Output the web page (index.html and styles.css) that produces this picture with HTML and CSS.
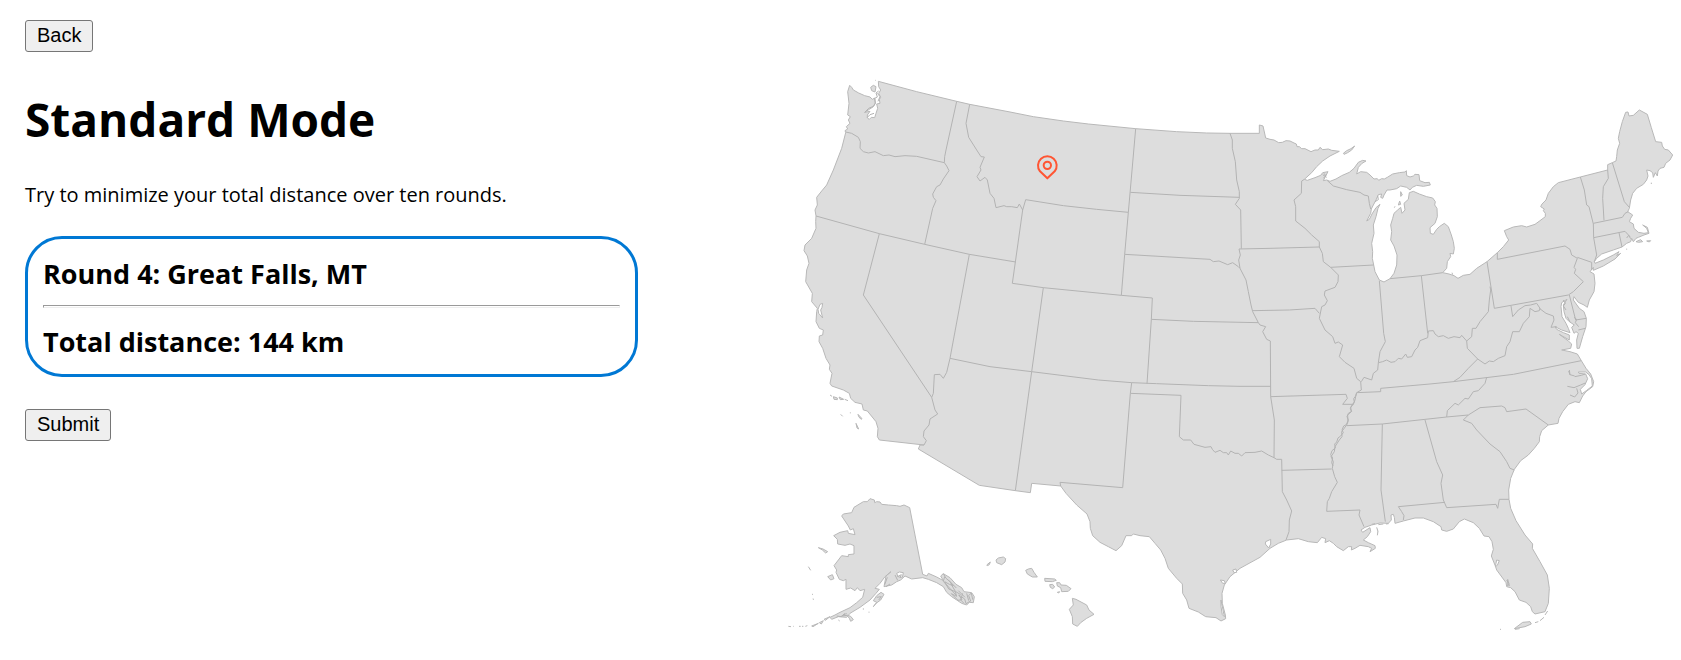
FILE: index.html
```html
<!DOCTYPE html>
<html lang="en">
<head>
<meta charset="utf-8">
<title>Standard Mode</title>
<link rel="stylesheet" href="styles.css">
</head>
<body>
<div class="game">
<main class="panel">
  <button type="button" class="btn">Back</button>
  <h1 class="title">Standard Mode</h1>
  <p class="intro">Try to minimize your total distance over ten rounds.</p>
  <section class="card">
    <h2 class="stat">Round 4: Great Falls, MT</h2>
    <hr class="rule">
    <h2 class="stat">Total distance: 144 km</h2>
  </section>
  <button type="button" class="btn">Submit</button>
</main>
<div class="map">
<svg class="map-svg" viewBox="0 0 2703 1780" role="img" aria-label="Map of the United States">
<g class="land">
<!-- Contiguous states -->
<path d="M209 76L215 82 220 90 236 99 254 107 270 111 277 118 284 114 286 130 280 140 268 148 254 157 270 154 262 165 262 174 268 178 274 172 284 173 288 160 293 145 290 132 300 130 298 118 302 112 296 100 302 90 296 80 295 64 410 95 530 124 569 133 690 156 760 170 850 183 925 192 1067 206 1190 215 1280 219 1350 220 1438 220 1438 195 1449 198 1457 234 1470 238 1482 240 1496 248 1507 247 1518 242 1530 243 1542 249 1549 252 1551 260 1558 260 1565 266 1575 266 1593 275 1605 270 1615 270 1620 262 1628 269 1645 267 1655 271 1678 274 1650 288 1628 303 1610 320 1595 338 1573 358 1582 361 1605 353 1622 346 1628 338 1644 335 1636 350 1630 362 1640 360 1650 364 1668 357 1685 347 1708 337 1722 325 1735 307 1748 301 1758 303 1746 310 1735 322 1730 342 1742 335 1760 337 1770 345 1782 357 1792 356 1796 361 1805 356 1813 357 1822 352 1838 342 1858 338 1875 336 1879 332 1880 347 1890 351 1900 348 1905 343 1917 344 1919 362 1935 368 1948 367 1951 375 1930 379 1910 376 1897 382 1890 390 1880 382 1862 378 1850 386 1830 390 1821 390 1812 405 1808 415 1802 412 1805 402 1795 404 1788 420 1780 435 1774 447 1772 460 1760 483 1768 478 1776 462 1788 443 1800 433 1794 445 1788 470 1780 495 1782 520 1775 550 1778 575 1777 595 1781 615 1785 635 1798 660 1812 666 1830 656 1842 640 1850 615 1851 585 1842 558 1832 540 1835 515 1832 495 1838 475 1842 460 1853 450 1862 442 1866 460 1875 450 1872 430 1885 418 1888 398 1900 394 1918 402 1940 410 1958 414 1966 425 1964 435 1971 445 1972 470 1965 490 1950 503 1951 520 1960 523 1970 508 1978 500 1993 490 2005 500 2014 525 2020 545 2023 565 2020 582 2010 580 2012 590 2002 605 2000 625 1988 638 2007 642 2022 647 2034 655 2050 646 2070 643 2090 625 2121 605 2152 578 2170 560 2186 540 2180 530 2173 512 2200 501 2225 497 2240 501 2265 493 2280 482 2296 470 2296 460 2290 452 2293 447 2282 440 2286 432 2298 420 2305 400 2320 380 2335 368 2401 351 2483 330 2483 314 2497 308 2508 303 2510 290 2512 270 2519 250 2515 235 2519 215 2527 185 2537 157 2544 156 2547 168 2560 166 2578 150 2602 163 2614 203 2627 245 2645 247 2647 258 2654 268 2665 270 2678 285 2670 300 2657 310 2652 322 2640 325 2634 333 2632 348 2626 338 2620 352 2618 338 2610 332 2600 330 2604 348 2600 360 2590 373 2570 385 2558 400 2552 420 2548 445 2543 455 2558 465 2552 475 2548 485 2560 492 2562 505 2575 517 2592 520 2605 518 2600 505 2588 495 2602 502 2607 520 2592 525 2575 532 2568 535 2560 545 2555 535 2552 545 2540 550 2526 561 2500 570 2465 582 2450 595 2443 605 2445 610 2470 600 2500 585 2517 575 2510 587 2522 580 2505 597 2470 618 2440 631 2440 622 2430 635 2442 642 2445 670 2442 695 2428 720 2422 742 2412 735 2395 727 2382 710 2380 720 2398 745 2412 755 2419 775 2418 800 2408 830 2398 865 2391 865 2390 840 2395 820 2388 815 2382 820 2375 802 2383 795 2368 785 2358 775 2352 755 2350 735 2361 718 2345 728 2343 740 2346 770 2358 790 2365 805 2370 818 2345 810 2325 800 2330 808 2350 818 2368 825 2368 840 2338 823 2365 843 2375 852 2372 865 2345 870 2370 875 2392 882 2404 902 2418 925 2432 942 2441 965 2438 980 2418 995 2408 1008 2398 1028 2385 1025 2365 1033 2348 1055 2337 1075 2334 1090 2305 1095 2285 1112 2279 1130 2278 1145 2263 1165 2245 1185 2222 1202 2203 1228 2192 1255 2186 1290 2187 1318 2192 1345 2208 1382 2235 1425 2258 1452 2257 1465 2280 1505 2302 1545 2308 1585 2305 1630 2295 1655 2265 1662 2257 1655 2252 1640 2238 1627 2218 1620 2205 1595 2192 1583 2180 1580 2178 1568 2150 1530 2146 1518 2134 1488 2140 1468 2136 1445 2127 1430 2112 1428 2098 1405 2080 1388 2053 1377 2038 1385 2020 1407 2000 1414 1985 1410 1983 1400 1960 1385 1930 1374 1905 1374 1870 1383 1845 1390 1843 1372 1840 1363 1833 1365 1834 1380 1825 1390 1800 1389 1775 1395 1755 1402 1743 1410 1748 1417 1770 1403 1772 1415 1762 1430 1750 1440 1765 1448 1785 1457 1786 1465 1770 1475 1775 1465 1765 1460 1740 1456 1725 1465 1714 1470 1715 1460 1705 1460 1690 1472 1670 1460 1660 1450 1648 1442 1635 1448 1637 1436 1625 1432 1612 1448 1585 1445 1555 1436 1520 1440 1495 1450 1470 1465 1440 1492 1380 1525 1350 1550 1333 1575 1326 1600 1327 1630 1336 1665 1337 1676 1323 1683 1308 1673 1277 1670 1255 1656 1227 1645 1220 1620 1208 1600 1207 1572 1190 1555 1165 1525 1155 1495 1142 1470 1125 1450 1108 1430 1080 1427 1060 1422 1055 1427 1038 1427 1025 1457 1008 1472 985 1460 960 1447 938 1427 931 1405 930 1385 921 1362 890 1335 858 1300 842 1278 755 1270 751 1298 706 1292 598 1276 415 1167 420 1155 432 1155 298 1140 292 1130 294 1105 288 1085 262 1053 250 1050 246 1032 225 1027 212 1015 208 1000 190 990 155 978 150 970 156 940 148 928 150 915 138 895 128 865 117 845 118 828 128 825 130 810 118 805 108 785 110 755 112 745 95 725 97 700 77 665 80 630 87 610 82 588 72 572 75 555 95 535 108 505 107 485 108 468 105 450 112 435 110 412 125 393 140 375 160 330 185 265 197 218 195 212 203 207 199 200 210 190 205 180 211 170 203 165 207 130 203 95Z"/>
<!-- Lake and coastal islands -->
<path d="M1690 280L1700 272 1713 266 1724 258 1715 270 1703 278 1692 283ZM272 82L280 76 288 80 285 96 275 92ZM286 61h2M150 1005l6 4M160 1010l12 4 0 5-10-1ZM177 1011l14 7-10 1ZM194 1018l10 4M182 1063l6 6M211 1057v3M234 1063l12 13-3 2-7-8ZM228 1090l8 17-5-3ZM2568 545l14-6 6 6-12 2ZM2600 543l12-1-4 4ZM2614 368v4M2540 566v3M1855 435l4-12 3 10ZM1862 395l5 10-5 4ZM1843 443l2-4M2203 1706L2228 1687 2250 1685 2254 1692 2235 1700ZM2205 1708l14-2M2265 1688l10-3M2280 1682l12-10M2295 1665l8-12M2160 1708h3M1790 1402l4 12-2 12M1775 1393l10-2M1795 1394l15-2M1818 1392l8-1M2016 638l2 6"/>
<!-- Alaska -->
<path d="M428 1543L389 1343 372 1335 360 1339 350 1337 325 1335 305 1333 300 1326 290 1325 284 1328 283 1320 270 1316 262 1325 250 1325 240 1331 222 1342 215 1358 190 1362 185 1368 205 1398 211 1410 220 1406 225 1424 205 1420 203 1412 180 1417 161 1427 172 1438 173 1452 195 1456 210 1452 222 1457 222 1482 205 1484 205 1490 185 1487 175 1500 162 1517 170 1530 168 1537 178 1558 190 1562 198 1558 198 1588 212 1584 225 1592 232 1583 240 1592 254 1588 248 1612 230 1628 210 1643 180 1657 165 1665 150 1672 155 1678 175 1670 200 1672 210 1660 240 1642 270 1620 288 1600 298 1588 285 1585 300 1570 315 1550 333 1535 318 1548 312 1580 335 1575 350 1565 362 1560 375 1548 395 1557 428 1553 445 1558 470 1568 490 1580 500 1597 515 1610 530 1620 545 1630 560 1635 568 1627 580 1628 583 1610 575 1598 552 1595 545 1583 528 1573 510 1553 490 1541 482 1548 490 1562 470 1551 445 1540 441 1548ZM280 1622L290 1607 303 1597 312 1603 302 1620 288 1630 280 1640 290 1627ZM115 1463l14 4 14 8-6 4-10-9ZM143 1550l14-6 5 12-10 4ZM85 1520l7 11M96 1602l3 2M98 1617l4 1M150 1670l-18 8 4 3ZM130 1682l-12 6 6 4ZM115 1690l-20 8 4 2ZM82 1697l-6 2M70 1699h-4M62 1699h-5M42 1699h-2M33 1700l-8-1M200 1665l12 4 8 10-8 5-4-9ZM250 1645v4M267 1655v3M350 1540l8-4 12 2-3 14-13-2ZM175 1680l4 3"/>
<!-- Hawaii -->
<path d="M620 1515l11-9-3 8-6 3ZM648 1500L655 1494 670 1491 677 1496 675 1506 665 1514 650 1508ZM737 1531L745 1527 755 1525 762 1537 772 1551 757 1551 742 1542ZM794 1555l30 2 5 4-12 4-22-1ZM809 1574l9-1 6 8-6 5-7-4ZM830 1568l9 0 4 7 16 1 14 10-8 8-20 1-3-12-10-5ZM832 1597l7-2-3 4ZM877 1615L888 1618 920 1635 927 1650 942 1663 920 1675 902 1688 892 1699 878 1692 877 1670 868 1648 880 1635Z"/>
</g>
<g class="water">
<path d="M2395 936l22 0 10 8 8 12 2 22-18 14-14 10-4-14 14-14 8-18-6-14-20-2Z"/>
<path d="M114 748l6-15 8-3-2 12-4 8 6 24-12-14ZM1457 1445l15-7 0 14-6 12-10-12ZM1321 1560l12 2 3 8-8 0ZM1358 1530l10-3 2 10-8 1ZM1323 1620l6 30 4 20-6-6-4-24ZM2150 1500l8 2-6 14-6 4 2-10ZM2183 1558l4 14-4 6Z"/>
</g>
<g class="borders">
<path d="M197 216L215 220 235 232 241 245 240 265 250 275 265 279 285 275 310 287 327 285 345 290 375 287 410 289 493 308"/>
<path d="M530 124L498 270 494 290 493 308 500 318 507 332 490 357 480 375 470 380 458 402 460 412 468 422 458 445 434 553"/>
<path d="M569 133L558 190 566 232 590 270 603 290 613 291 600 322 603 330 591 350 600 363 615 352 622 360 630 400 642 415 648 443 660 440 672 437 680 440 695 440 712 443 718 432 728 450"/>
<path d="M108 468L298 521 434 553 568 583 707 606M737 419L728 450 697 670 790 683 1024 706 1117 714M737 419L850 437 950 448 1045 457"/>
<path d="M298 521L250 705 455 1012 460 1000 463 944 480 943 490 955 500 937 510 895 568 583M455 1012L465 1050 473 1062 450 1077 447 1095 432 1113 430 1130 439 1142 432 1155"/>
<path d="M510 895L630 920 755 935 955 960 1055 968 1130 971 1285 977 1380 979 1472 979M790 683L755 935 706 1292M1067 206L1045 457 1034 583 1024 706M1051 397L1200 406 1378 412"/>
<path d="M1034 583L1290 598 1300 605 1317 603 1343 614 1358 608 1375 620 1380 625 1398 660 1405 695 1413 735 1418 755 1435 788 1440 795 1457 800 1448 815 1460 838 1471 843 1472 1010 1483 1080 1482 1193"/>
<path d="M1117 714L1114 778 1101 971M1114 778L1240 784 1435 788M1055 968L1051 1000 1028 1283 840 1267 842 1278M1051 1000L1203 1006 1198 1130 1210 1140 1232 1140 1242 1153 1275 1162 1293 1160 1297 1168 1305 1177 1320 1171 1330 1178 1340 1178 1345 1185 1352 1173 1365 1180 1375 1180 1385 1188 1395 1178 1425 1177 1445 1173 1465 1185 1482 1193 1490 1198 1505 1198 1507 1295 1520 1320 1535 1353 1528 1380 1527 1415 1518 1440M1505 1231L1655 1227"/>
<path d="M1350 220L1357 240 1357 265 1366 305 1370 360 1378 395 1378 415 1366 433 1382 450 1384 566M1618 561L1470 565 1377 567 1381 585 1376 600 1380 625M1418 752L1528 750 1605 745 1618 760M1472 1010L1698 1003 1702 1015 1688 1033 1720 1033"/>
<path d="M1573 358L1565 363 1564 400 1542 420 1547 440 1547 483 1575 505 1595 525 1618 545 1618 561 1627 580 1630 605 1652 622 1675 645 1674 665 1665 682 1635 693 1633 705 1642 722 1635 735 1625 740 1618 775 1635 810 1658 830 1665 850 1675 846 1688 855 1678 890 1695 907 1722 925 1730 955 1742 965 1744 990 1730 998 1727 1010 1725 1020 1720 1033 1712 1042 1714 1055 1703 1065 1704 1085 1700 1095 1685 1115 1686 1130 1678 1140 1665 1160 1663 1175 1653 1190 1660 1205 1657 1225 1664 1250 1672 1267 1655 1295 1648 1315 1642 1325 1640 1354 1740 1350 1737 1365 1752 1400"/>
<path d="M1729 1000l-2 8-6 8 2 10-8 10-4 10 4 8-10 6-4 10 4 10-6 14-8 4-5 12 4 8-8 10-8 6-4 12-6 6 2 12-10 8-4 12 6 10-3 14 4 10"/>
<path d="M1652 622L1781 615M1642 362L1660 378 1700 389 1740 397 1752 405 1765 408 1768 430 1772 447M1830 656L1924 647 1988 638M1924 647L1943 820M1798 662L1811 820 1816 845 1800 875 1795 908"/>
<path d="M1744 965L1752 952 1775 960 1780 940 1793 930 1795 908 1808 905 1820 900 1833 907 1845 905 1855 895 1865 897 1877 882 1882 892 1895 890 1905 870 1913 862 1920 842 1943 833 1945 813 1960 812 1965 822 1975 830 1990 827 2005 835 2022 830 2040 833 2045 826 2060 843 2075 830 2077 805 2088 805 2100 785 2125 755 2128 720 2132 690 2130 680M2121 605L2143 745 2365 705 2380 695 2410 665 2383 640 2387 628 2382 622 2392 595 2375 585 2370 568 2355 558 2152 598 2152 578M2392 592L2435 607 2435 630"/>
<path d="M2060 843L2062 865 2093 897 2115 912 2128 903 2140 905 2155 895 2175 887 2180 860 2190 845 2198 815 2218 815 2230 790 2248 770 2250 745 2265 755 2278 752 2280 745 2270 730 2252 735 2235 737 2215 750 2198 770 2193 738M2278 745L2298 760 2320 768 2322 780 2313 802 2330 800M2368 705L2387 780 2419 775M2395 810L2416 805"/>
<path d="M1730 998L1802 995 1802 985 1950 972 2020 965 2200 943 2404 902M2020 965L2040 952 2065 925 2093 897M1700 1097L1807 1092 2000 1071 2065 1065 2100 1043 2165 1038 2175 1043 2180 1055 2238 1047 2305 1095M2000 1071L2002 1052 2025 1030 2035 1035 2055 1015 2065 1017 2080 995 2095 992 2115 970 2120 952M2065 1065L2050 1080 2075 1090 2090 1110 2130 1152 2160 1175 2180 1205 2190 1225 2203 1230"/>
<path d="M1807 1092L1803 1290 1816 1385M1935 1080L1970 1205 1988 1245 1983 1270 1990 1320 2000 1343 2148 1333 2153 1345 2158 1318 2187 1318M1870 1380L1872 1367 1865 1355 1855 1340 1995 1327"/>
<path d="M2401 351L2413 390 2420 435 2427 440 2440 492 2441 533 2450 585 2443 605M2483 330L2485 355 2470 380 2468 415 2472 481M2440 490L2527 472 2535 460 2545 455M2441 533L2535 514 2550 530M2517 518L2526 561M2497 308L2533 425 2548 442"/>
<!-- Inlets and sounds -->
<path d="M254 157l12-12 14-6 6-10-2-14 8-4-4-12 8-6M262 172l8-8 12-4M292 100l8 10-6 14M2368 930l2 14 14 4M2370 945l-4-12M2384 950l20-4 12-4M2362 979l20 4 20-8 14-6M2370 1005l14 6 10-12-4-14M2396 800l-10-12 4-10-8-6M2350 720l6 10-6 8 8 12M2362 770l8 16M2540 534l6-8 6 10M1632 340l6 8-8 6M1640 352l-12-8M1785 425l10-6-2-12M2180 1560l6 10 2 8"/>
<path d="M490 1541l8 14 10 8 12 14-12-4-14-8 12 22 20 8 4 14-16-8 20 20 12-2-10-14 18 12 4 14 14-8-6-16 8-8 4 20M500 1575l28 30M535 1592l20 20M494 1550l-4 14 12 14M512 1570l14 24 16 10M505 1560l24 24M548 1600l-6 20 10 10M560 1600l6 22M322 1552l-8 22M200 1660l-15 8 16-2M170 1668l14 2 10-10M290 1612l14-2-8 10M352 1550l12-6-4 10M345 1545l8 16M330 1572l-12 8"/>
</g>
<path class="pin" d="M802 355L780 334A28 28 0 1 1 824 334Z"/>
<circle class="pin" cx="802" cy="316" r="11"/>
</svg>
</div>
</div>
</body>
</html>
```
FILE: styles.css
```css
body {
  margin: 0;
  background: #fff;
  color: #000;
  font-family: "Segoe UI", "Open Sans", sans-serif;
}

.game {
  display: grid;
  grid-template-columns: 46.4% 53.6%;
}

.panel {
  padding: 20px 142px 20px 25px;
}

.btn {
  display: block;
  height: 32px;
  padding: 0 11px 3px;
  border: 1px solid #767676;
  border-radius: 3px;
  background: #efefef;
  color: #000;
  font: 20px/28px "Liberation Sans", Arial, sans-serif;
}

.title {
  margin: 35px 0 29px;
  font-size: 46px;
  line-height: 64px;
  font-weight: 700;
}

.intro {
  margin: 0 0 26px;
  font-size: 20px;
  line-height: 30px;
  font-weight: 400;
}

.card {
  margin-bottom: 32px;
  padding: 16px 15px 13px;
  border: 3px solid #0078d4;
  border-radius: 37px;
}

.stat {
  margin: 0;
  font-size: 27px;
  line-height: 38px;
  font-weight: 700;
}

.rule {
  height: 1px;
  margin: 12px 0 15px;
  border: 1px solid;
  border-color: #9a9a9a #eee #eee #9a9a9a;
}

.map {
  padding-top: 60px;
}

.map-svg {
  display: block;
  width: 100%;
  height: auto;
}

.land path {
  fill: #ddd;
  stroke: #b8b8b8;
  stroke-width: 3;
  stroke-linejoin: round;
}

.water path {
  fill: #fff;
  stroke: #b8b8b8;
  stroke-width: 3;
  stroke-linejoin: round;
}

.borders path {
  fill: none;
  stroke: #b3b3b3;
  stroke-width: 3;
  stroke-linejoin: round;
}

.pin {
  fill: none;
  stroke: #ff5533;
  stroke-width: 6;
  stroke-linejoin: round;
}
```
